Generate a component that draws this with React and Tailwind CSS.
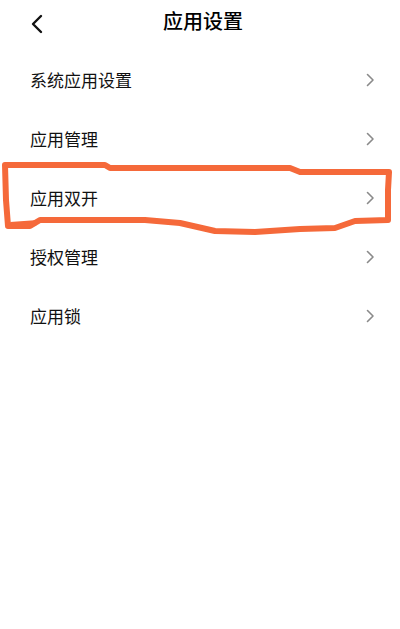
import React from 'react'

const items = ['系统应用设置', '应用管理', '应用双开', '授权管理', '应用锁']

const Chevron = () => (
  <svg width="9" height="14" viewBox="0 0 9 14" fill="none">
    <path d="M1.5 1.5 L7 7 L1.5 12.5" stroke="#8a8a8a" strokeWidth="1.6" strokeLinecap="round" strokeLinejoin="round" />
  </svg>
)

const App = () => {
  return (
    <div className="relative w-[400px] h-[629px] bg-white overflow-hidden" style={{ fontFamily: '"Noto Sans CJK SC", "Noto Sans", sans-serif' }}>
      <header className="relative h-[50px] flex items-center justify-center">
        <button className="absolute left-[26px] top-[10px] p-1">
          <svg width="14" height="20" viewBox="0 0 14 20" fill="none">
            <path d="M11 2 L3 10 L11 18" stroke="#111" strokeWidth="2.4" strokeLinecap="round" strokeLinejoin="round" />
          </svg>
        </button>
        <h1 className="text-[20px] font-medium text-black ml-[6px] -mt-[8px]">应用设置</h1>
      </header>

      <ul>
        {items.map((item) => (
          <li key={item} className="h-[59px] flex items-center justify-between pl-[30px] pr-[25px]">
            <span className="text-[17px] text-[#111]">{item}</span>
            <Chevron />
          </li>
        ))}
      </ul>

      {/* hand-drawn highlight */}
      <svg className="absolute left-0 top-0 pointer-events-none" width="400" height="629" viewBox="0 0 400 629" fill="none">
        <path
          d="M5 165 L105 165 L110 168 L290 168 L300 172 L389 172 L388 190 L388 220 L355 221 L335 228 L300 229 L255 232 L215 231 L180 223 L145 220 L40 220 L30 226 L8 226 L6 200 L5 165 Z"
          stroke="#f5693a"
          strokeWidth="6"
          strokeLinejoin="round"
        />
        <path d="M10 222 L38 220 L36 226 L12 227 Z" fill="#f5693a" />
      </svg>
    </div>
  )
}

export default App
